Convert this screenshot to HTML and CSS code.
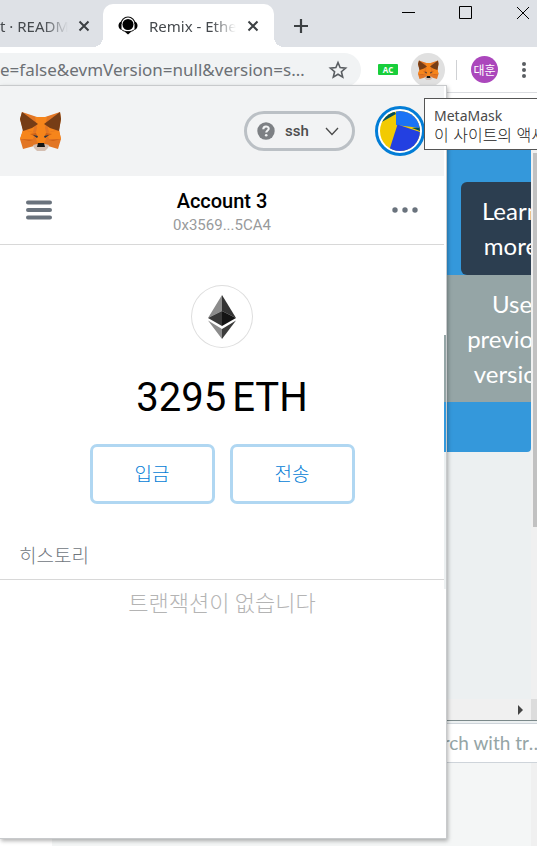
FILE: index.html
```html
<!DOCTYPE html>
<html lang="ko">
<head>
<meta charset="utf-8">
<title>Remix - Ethereum IDE</title>
<link rel="stylesheet" href="styles.css">
</head>
<body>
<svg class="defs" aria-hidden="true">
  <symbol id="fox" viewBox="0 0 42 40">
    <path fill="#e27625" d="M2 1 17 6H25L40 1 41 8 39 19 41 28 38 38 28 35H14L3 38 0 28 3 19 0 8Z"/>
    <path fill="#f6851b" d="M15 6H27L25 17 27 25 24 33H18L15 25 17 17ZM3 19 15 22 13 28H0ZM39 19 27 22 29 28H41ZM5 19 15 13 13 21ZM37 19 27 13 29 21Z"/>
    <path fill="#cd6116" d="M0 28 13 29 9 30ZM41 28 29 29 33 30ZM10 23 16 22 18 27ZM32 23 26 22 24 27Z"/>
    <path fill="#763d16" d="M2 1 18 13 12 17 3 20 0 8ZM40 1 24 13 30 17 39 20 41 8Z"/>
    <path fill="#d5bfb2" d="M13 34 17 33H25L29 34 28 37 25 40H17L14 37Z"/>
    <path fill="#161616" d="M18 32H24L25 36H17Z"/>
    <path fill="#233447" d="M13 24 18 25 17 27ZM29 24 24 25 25 27Z"/>
  </symbol>
</svg>
<div class="browser">
  <header class="tabs">
    <div class="tab tab-back">
      <span class="tab-title">t · README.md</span>
      <button class="icon-btn" aria-label="탭 닫기"><svg width="12" height="12" viewBox="0 0 12 12"><path d="M1.500 1.500 10.500 10.500M10.500 1.500 1.500 10.500" stroke="#3c4043" stroke-width="2"/></svg></button>
    </div>
    <div class="tab tab-active">
      <svg class="favicon" width="20" height="20" viewBox="0 0 20 20"><path d="M3 8a7 7 0 0 1 14 0" fill="none" stroke="#111" stroke-width="1.200"/><circle cx="10" cy="8.500" r="5.500"/><path d="M3.500 5.500C-.5 6-.5 13 3.500 14ZM16.500 5.500c4 .5 4 7.500 0 8.500ZM6.500 15.500h7L10 18.500Z"/><path d="M3.500 13.500c3 3 10 3 13 0" fill="none" stroke="#111"/></svg>
      <span class="tab-title">Remix - Ethereum</span>
      <button class="icon-btn" aria-label="탭 닫기"><svg width="12" height="12" viewBox="0 0 12 12"><path d="M1.500 1.500 10.500 10.500M10.500 1.500 1.500 10.500" stroke="#3c4043" stroke-width="2"/></svg></button>
    </div>
    <button class="icon-btn new-tab" aria-label="새 탭"><svg width="16" height="16" viewBox="0 0 16 16"><path d="M8 1v14M1 8h14" stroke="#3c4043" stroke-width="2.200"/></svg></button>
    <div class="window-controls">
      <button class="icon-btn" aria-label="최소화"><svg width="14" height="14" viewBox="0 0 14 14"><path d="M0 6.500h13" stroke="#000"/></svg></button>
      <button class="icon-btn" aria-label="최대화"><svg width="14" height="14" viewBox="0 0 14 14"><path d="M.5.5h12v12H.5Z" fill="none" stroke="#000"/></svg></button>
      <button class="icon-btn" aria-label="닫기"><svg width="14" height="14" viewBox="0 0 14 14"><path d="m1 1 12 12M13 1 1 13" stroke="#000"/></svg></button>
    </div>
  </header>
  <div class="toolbar">
    <div class="omnibox">
      <input class="url" aria-label="주소" value="e=false&amp;evmVersion=null&amp;version=soljson-v0.4.24">
      <button class="icon-btn" aria-label="북마크"><svg width="20" height="20" viewBox="0 0 20 20"><path d="m10 2.500 2.100 5.100 5.500.5-4.200 3.600 1.300 5.400-4.700-2.900-4.700 2.900 1.300-5.400-4.200-3.600 5.500-.5Z" fill="none" stroke="#5a5e62" stroke-width="1.600"/></svg></button>
    </div>
    <button class="ext-ac">AC</button>
    <button class="icon-btn ext-fox" aria-label="MetaMask"><svg width="21" height="20"><use href="#fox"/></svg></button>
    <span class="divider"></span>
    <button class="icon-btn profile">대훈</button>
    <button class="icon-btn" aria-label="메뉴"><svg width="4" height="18" viewBox="0 0 4 18" fill="#5a5e62"><circle cx="2" cy="3" r="2"/><circle cx="2" cy="9" r="2"/><circle cx="2" cy="15" r="2"/></svg></button>
  </div>
  <main class="page">
    <div class="viewport">
      <div class="column">
        <div class="banner">
          <a class="cta cta-dark" href="#">Learn<br>more</a>
          <a class="cta cta-gray" href="#">Use<br>previous<br>version</a>
        </div>
      </div>
      <div class="vscroll"><div class="thumb"></div></div>
    </div>
    <div class="hscroll"><span class="arrow"></span><span class="corner"></span></div>
    <div class="search"><input aria-label="검색" placeholder="Search with transaction hash"></div>
    <div class="terminal"></div>
  </main>
</div>

<section class="popup">
  <header class="popup-head">
    <svg width="42" height="40"><use href="#fox"/></svg>
    <div class="head-right">
      <button class="network">
        <svg width="18" height="18" viewBox="0 0 18 18"><circle cx="9" cy="9" r="8.700" fill="#7d8084"/><path d="M6.300 7.200c0-3.600 5.400-3.500 5.400-.5 0 1.800-2.500 1.800-2.500 3.900" fill="none" stroke="#f2f3f4" stroke-width="2.100"/><circle cx="9.200" cy="13.200" r="1.300" fill="#f2f3f4"/></svg>
        <span>ssh</span>
        <svg width="14" height="9" viewBox="0 0 14 9"><path d="m1 1 6 6.500L13 1" fill="none" stroke="#4a4a4a" stroke-width="1.300"/></svg>
      </button>
      <button class="icon-btn avatar" aria-label="내 계정"><svg width="40" height="40" viewBox="0 0 40 40"><clipPath id="disc"><circle cx="20" cy="20" r="20"/></clipPath><g clip-path="url(#disc)"><path fill="#f2ca02" d="M0 0h40v40H0Z"/><path fill="#034f5d" d="M0 8 14 0 16 3 0 12ZM32 17l8-1v4Z"/><path fill="#1a73f5" d="M16 0h24v17L16 14Z"/><path fill="#2340e1" d="M17.500 13.500 40 21v19H9Z"/></g></svg></button>
    </div>
  </header>
  <div class="account">
    <button class="icon-btn" aria-label="메뉴"><svg width="26" height="20" viewBox="0 0 26 20"><path d="M2 2.500h22M2 10h22M2 17.500h22" stroke="#6a737d" stroke-width="4" stroke-linecap="round"/></svg></button>
    <div class="account-id"><strong>Account 3</strong><span>0x3569...5CA4</span></div>
    <button class="icon-btn" aria-label="더보기"><svg width="26" height="6" viewBox="0 0 26 6" fill="#6a737d"><circle cx="3" cy="3" r="2.700"/><circle cx="13" cy="3" r="2.700"/><circle cx="23" cy="3" r="2.700"/></svg></button>
  </div>
  <div class="balance">
    <div class="coin"><svg width="28" height="44" viewBox="0 0 28 44"><path fill="#8c8c8c" d="M14 0v16L0 23ZM0 25.500 14 34v10Z"/><path fill="#343434" d="M14 0v16l14 7Z"/><path fill="#393939" d="M14 16v15L0 23Z"/><path fill="#141414" d="M14 16v15l14-8Z"/><path fill="#3c3c3b" d="M14 34v10l14-18.500Z"/></svg></div>
    <div class="amount"><span>3295</span><span>ETH</span></div>
    <div class="actions"><button>입금</button><button>전송</button></div>
  </div>
  <h2 class="history">히스토리</h2>
  <p class="empty">트랜잭션이 없습니다</p>
</section>
<div class="tooltip" role="tooltip">
  <div>MetaMask</div>
  <div class="tooltip-note">이 사이트의 액세스 권한</div>
</div>
</body>
</html>
```

FILE: styles.css
```css
* { box-sizing: border-box; }
body {
  margin: 0;
  height: 100vh;
  position: relative;
  overflow: hidden;
  font-family: "Noto Sans", "Noto Sans CJK KR", sans-serif;
  background: #fff;
}
button { font: inherit; cursor: pointer; }
.defs { position: absolute; width: 0; height: 0; }
.icon-btn {
  display: flex;
  align-items: center;
  justify-content: center;
  flex: none;
  padding: 0;
  border: 0;
  background: none;
}
.browser { display: flex; flex-direction: column; height: 100vh; }

.tabs {
  display: flex;
  flex: none;
  height: 47px;
  padding-top: 4px;
  background: #dee1e6;
}
.tab {
  display: flex;
  align-items: center;
  flex: none;
  font-size: 15px;
  color: #45494d;
}
.tab-back { width: 103px; padding-right: 13px; gap: 10px; }
.tab-active {
  position: relative;
  width: 171px;
  padding: 0 15px;
  gap: 11px;
  border-radius: 10px 10px 0 0;
  background: #fff;
}
.tab-active::before,
.tab-active::after {
  content: "";
  position: absolute;
  bottom: 0;
  width: 10px;
  height: 10px;
}
.tab-active::before { right: 100%; background: radial-gradient(circle at 0 0, #dee1e6 10px, #fff 10px); }
.tab-active::after { left: 100%; background: radial-gradient(circle at 100% 0, #dee1e6 10px, #fff 10px); }
.favicon { flex: none; }
.tab-title {
  flex: 1;
  overflow: hidden;
  white-space: nowrap;
  mask-image: linear-gradient(to left, transparent, #000 24px);
}
.new-tab { margin-left: 19px; }
.window-controls {
  display: flex;
  align-items: flex-start;
  gap: 43px;
  margin-left: auto;
  padding: 2px 7px 0 0;
}

.toolbar {
  display: flex;
  align-items: center;
  flex: none;
  height: 46px;
  padding-right: 11px;
  border-bottom: 1px solid #dadce0;
}
.omnibox {
  display: flex;
  align-items: center;
  flex: 1;
  min-width: 0;
  height: 34px;
  padding-right: 13px;
  gap: 20px;
  border-radius: 0 17px 17px 0;
  background: #f1f3f4;
}
.url {
  flex: 1;
  min-width: 0;
  padding: 0;
  border: 0;
  background: none;
  font: 17px "Noto Sans", sans-serif;
  color: #6c7075;
  text-overflow: ellipsis;
}
.ext-ac {
  width: 20px;
  height: 11px;
  margin: 0 13px 0 17px;
  padding: 0;
  border: 0;
  border-radius: 1px;
  background: #18ce3b;
  color: #fff;
  font: bold 8px/11px "Open Sans", sans-serif;
}
.ext-fox { width: 34px; height: 34px; border-radius: 50%; background: #e0e0e0; }
.divider { width: 1px; height: 20px; margin: 0 14px 0 11px; background: #cfd1d4; }
.profile {
  width: 27px;
  height: 27px;
  margin-right: 24px;
  border-radius: 50%;
  background: #ab47bc;
  color: #fff;
  font-size: 12px;
}

.page {
  display: flex;
  flex-direction: column;
  flex: 1;
  min-height: 0;
  padding-top: 6px;
  overflow: hidden;
  font-family: Lato, sans-serif;
}
.viewport { display: flex; flex: 1; min-height: 0; background: #ecf0f1; }
.column { flex: 1; min-width: 0; overflow: hidden; }
.banner {
  display: flex;
  flex-direction: column;
  align-items: flex-end;
  padding: 83px 0 50px;
  border-radius: 0 0 4px 0;
  background: #3498db;
}
.cta {
  flex: none;
  color: #fff;
  font-size: 24px;
  line-height: 35px;
  text-align: center;
  text-decoration: none;
}
.cta-dark { width: 100px; margin-right: -30px; padding: 11px 0 12px; border-radius: 6px; background: #2c3e50; }
.cta-gray { width: 136px; margin-right: -49px; padding: 11px 0; background: #95a5a6; }
.vscroll { width: 6px; padding: 54px 0 0 2px; background: #f0f0f0; }
.thumb { height: 374px; background: #c1c1c1; }
.hscroll {
  display: flex;
  align-items: center;
  justify-content: flex-end;
  flex: none;
  height: 22px;
  border-bottom: 1px solid #7b898a;
  background: #f0f0f0;
}
.arrow { border: 5px solid transparent; border-left-color: #444; border-right: 0; }
.corner { width: 6px; align-self: stretch; margin-left: 8px; background: #dcdcdc; }
.search { flex: none; margin-right: -8px; padding-top: 2px; background: #ecf0f1; }
.search input {
  display: block;
  width: 100%;
  height: 40px;
  padding: 0 0 2px 413px;
  border: solid #ced4da;
  border-width: 1px 0;
  background: #fff;
  font: 19px Lato, sans-serif;
  text-overflow: ellipsis;
}
.search input::placeholder { color: #95a5a6; opacity: 1; }
.terminal {
  flex: none;
  height: 83px;
  margin-left: 52px;
  border-right: 6px solid #f0f0f0;
  background: #f4f6f6;
}

.popup {
  position: absolute;
  top: 85px;
  left: 0;
  width: 447px;
  height: 754px;
  padding-right: 2px;
  border: solid #c8cacc;
  border-width: 1px 1px 1px 0;
  background: #fff;
  box-shadow: 1px 2px 4px rgba(0, 0, 0, .3);
  font-family: Roboto, "Noto Sans CJK KR", sans-serif;
}
.popup::after {
  content: "";
  position: absolute;
  top: 249px;
  right: 0;
  width: 2px;
  height: 254px;
  background: linear-gradient(#95a5a6 67px, #3498db 67px 117px, #ecf0f1 117px);
}
.popup-head {
  display: flex;
  align-items: center;
  justify-content: space-between;
  height: 90px;
  padding: 0 19px 0 20px;
  background: #f2f3f4;
}
.head-right { display: flex; align-items: center; gap: 20px; }
.network {
  display: flex;
  align-items: center;
  gap: 10px;
  width: 111px;
  height: 40px;
  padding: 0 13px 0 10px;
  border: 3px solid #bbc0c5;
  border-radius: 20px;
  background: none;
  color: #4d4d4d;
  font-size: 15px;
  font-weight: 500;
}
.network span { flex: 1; text-align: left; }
.avatar {
  width: 50px;
  height: 50px;
  border: 3px solid #037dd6;
  border-radius: 50%;
  background: #fff;
}
.account {
  display: flex;
  align-items: center;
  justify-content: space-between;
  height: 69px;
  padding: 0 26px;
  border-bottom: 1px solid #d8d8d8;
}
.account-id { display: flex; flex-direction: column; align-items: center; padding-top: 4px; }
.account-id strong { font-size: 20px; font-weight: 500; line-height: 25px; }
.account-id span { color: #989a9b; font-size: 15px; line-height: 22px; }
.balance { display: flex; flex-direction: column; align-items: center; padding-top: 40px; }
.coin {
  display: flex;
  align-items: center;
  justify-content: center;
  width: 62px;
  height: 63px;
  border: 1px solid #dedede;
  border-radius: 50%;
}
.amount { display: flex; gap: 6px; margin-top: 26px; font-size: 40px; line-height: 48px; }
.actions { display: flex; gap: 15px; margin-top: 22px; }
.actions button {
  width: 125px;
  height: 60px;
  padding: 0 0 4px;
  border: 3px solid #b0d7f2;
  border-radius: 7px;
  background: #fff;
  color: #037dd6;
  font-size: 19px;
  font-weight: 300;
  font-family: "Noto Sans CJK KR", sans-serif;
}
.history {
  margin: 40px 0 0;
  padding: 0 19px 9px;
  border-bottom: 1px solid #d8d8d8;
  color: #6f767d;
  font-size: 19px;
  font-weight: 300;
  line-height: 26px;
}
.empty { margin: 8px 0 0; color: #b4b4b4; font-size: 22px; font-weight: 300; line-height: 32px; text-align: center; }
.tooltip {
  position: absolute;
  top: 98px;
  left: 424px;
  right: -1px;
  height: 52px;
  padding: 7px 0 0 9px;
  border: 1px solid #555;
  background: #fff;
  color: #494949;
  font-size: 14px;
  line-height: 19px;
  white-space: nowrap;
  overflow: hidden;
}
.tooltip-note { font-family: "Noto Sans CJK KR", sans-serif; font-size: 16px; font-weight: 300; color: #222; }
```
